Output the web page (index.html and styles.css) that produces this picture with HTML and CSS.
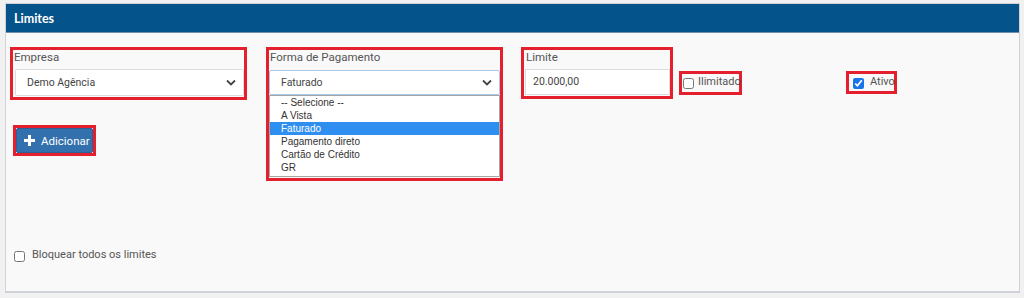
FILE: index.html
```html
<!DOCTYPE html>
<html lang="pt-BR">
<head>
    <meta charset="UTF-8">
    <meta name="viewport" content="width=device-width, initial-scale=1.0">
    <title>Limites</title>
    <link rel="stylesheet" href="styles.css">
</head>
<body>
    <div class="panel">
        <div class="panel-heading">Limites</div>
        <div class="panel-body">
            <div class="form-row">
                <!-- empresa + botão -->
                <div class="col-empresa">
                    <div class="mark group-empresa">
                        <label class="field-label">Empresa</label>
                        <div class="select-box">
                            <span>Demo Agência</span>
                            <svg class="chevron" width="10" height="7" viewBox="0 0 10 7"><path d="M1 1.5 L5 5.5 L9 1.5" fill="none" stroke="#444" stroke-width="1.8"/></svg>
                        </div>
                    </div>
                    <div class="mark btn-mark">
                        <button class="btn-add">
                            <svg width="11" height="11" viewBox="0 0 11 11"><path d="M4 0h3v4h4v3H7v4H4V7H0V4h4z" fill="#fff"/></svg>
                            Adicionar
                        </button>
                    </div>
                </div>

                <!-- forma de pagamento -->
                <div class="mark group-forma">
                    <label class="field-label">Forma de Pagamento</label>
                    <div class="select-box focused">
                        <span>Faturado</span>
                        <svg class="chevron" width="10" height="7" viewBox="0 0 10 7"><path d="M1 1.5 L5 5.5 L9 1.5" fill="none" stroke="#444" stroke-width="1.8"/></svg>
                    </div>
                    <ul class="option-list">
                        <li>-- Selecione --</li>
                        <li>A Vista</li>
                        <li class="selected">Faturado</li>
                        <li>Pagamento direto</li>
                        <li>Cartão de Crédito</li>
                        <li>GR</li>
                    </ul>
                </div>

                <!-- limite -->
                <div class="mark group-limite">
                    <label class="field-label">Limite</label>
                    <div class="text-input">20.000,00</div>
                </div>

                <div class="mark check-mark check-ilimitado">
                    <input type="checkbox">
                    <span>Ilimitado</span>
                </div>

                <div class="mark check-mark check-ativo">
                    <input type="checkbox" checked>
                    <span>Ativo</span>
                </div>
            </div>

            <div class="check-line">
                <input type="checkbox">
                <span>Bloquear todos os limites</span>
            </div>
        </div>
    </div>
</body>
</html>
```

FILE: styles.css
```css
/* reset */
* {
    margin: 0;
    padding: 0;
    box-sizing: border-box;
}

body {
    font-family: 'Roboto', 'Liberation Sans', sans-serif;
    background-color: #f1f1f1;
    color: #555;
    font-size: 11px;
}

/* painel */
.panel {
    margin: 3px 0 0 5px;
    width: 1015px;
    height: 290px;
    background-color: #f9f9f9;
    border: 1px solid #cfd3d8;
    border-bottom-width: 2px;
}

.panel-heading {
    height: 29px;
    line-height: 29px;
    padding-left: 8px;
    background-color: #05538b;
    color: #fff;
    font-family: 'Lato', 'Liberation Sans', sans-serif;
    font-weight: bold;
    font-size: 12.5px;
    border-bottom: 1px solid #6f8fae;
}

.panel-body {
    padding: 14px 0 0 4px;
}

.form-row {
    display: flex;
    align-items: flex-start;
}

/* caixas vermelhas de destaque */
.mark {
    border: 3px solid #e5202e;
}

.field-label {
    display: block;
    line-height: 15px;
    color: #555;
    font-size: 11.5px;
}

/* empresa */
.col-empresa {
    display: flex;
    flex-direction: column;
    width: 237px;
}

.group-empresa {
    height: 53px;
    padding-left: 1px;
}

.group-empresa .select-box {
    margin: 4px 0 0 1px;
    height: 27px;
    width: 229px;
}

.select-box {
    display: flex;
    align-items: center;
    justify-content: space-between;
    background: #fff;
    border: 1px solid #dcdcdc;
    border-radius: 2px;
    padding: 0 7px 0 11px;
    font-size: 10.5px;
    color: #444;
}

.select-box.focused {
    border-color: #a9c8e8;
}

.chevron {
    display: block;
}

.btn-mark {
    margin: 25px 0 0 3px;
    width: 83px;
    height: 31px;
}

.btn-add {
    display: flex;
    align-items: center;
    gap: 6px;
    width: 77px;
    height: 25px;
    padding-left: 7px;
    background-color: #3371ae;
    border: 1px solid #2b6197;
    border-radius: 2px;
    color: #fff;
    font-family: 'Roboto', 'Liberation Sans', sans-serif;
    font-size: 11.5px;
}

/* forma de pagamento */
.group-forma {
    margin-left: 19px;
    width: 237px;
    height: 134px;
}

.group-forma .field-label {
    padding-left: 1px;
}

.group-forma .select-box {
    margin-top: 5px;
    height: 25px;
}

.option-list {
    list-style: none;
    background: #fff;
    border: 1px solid #a6a6a6;
    padding-bottom: 2px;
    font-family: 'Liberation Sans', Arial, sans-serif;
    font-size: 10px;
    color: #333;
}

.option-list li {
    height: 13px;
    line-height: 13px;
    padding-left: 11px;
}

.option-list li.selected {
    background-color: #2f8ff0;
    color: #fff;
}

/* limite */
.group-limite {
    margin-left: 18px;
    width: 152px;
    height: 52px;
}

.group-limite .field-label {
    padding-left: 2px;
}

.text-input {
    margin: 4px 0 0 1px;
    height: 26px;
    width: 145px;
    line-height: 24px;
    padding-left: 7px;
    background: #fff;
    border: 1px solid #dcdcdc;
    font-size: 10.5px;
    color: #444;
}

/* checkboxes */
.check-mark {
    display: flex;
    align-items: flex-start;
    margin-top: 24px;
    height: 24px;
    padding-top: 1px;
    font-size: 11px;
    line-height: 14px;
}

.check-mark input,
.check-line input {
    width: 11px;
    height: 11px;
    margin-top: 3px;
    accent-color: #1a73e8;
}

.check-ilimitado {
    margin-left: 6px;
    width: 63px;
    padding-left: 1px;
    gap: 4px;
}

.check-ativo {
    margin-left: 104px;
    width: 51px;
    height: 23px;
    padding-left: 4px;
    gap: 6px;
}

.check-line {
    display: flex;
    align-items: flex-start;
    gap: 7px;
    margin: 66px 0 0 4px;
    line-height: 15px;
}

.check-line input {
    margin-top: 4px;
}
```
